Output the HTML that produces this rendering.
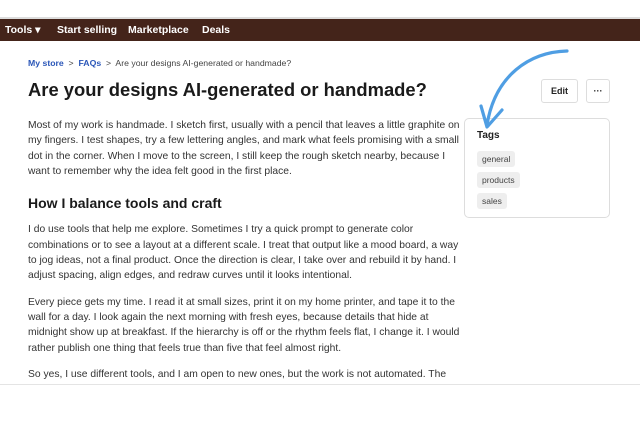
<!DOCTYPE html>
<html><head><style>
*{margin:0;padding:0;box-sizing:border-box}
body{width:640px;height:426px;background:#fff;font-family:"Liberation Sans",Arial,sans-serif;position:relative;overflow:hidden;color:#222}
.topline{position:absolute;top:17px;left:0;width:640px;height:2px;background:#ddd}
.nav{position:absolute;top:19px;left:0;width:640px;height:22px;background:#44241a;color:#fff;font-size:10.5px;font-weight:bold}
.nav span{position:absolute;top:5px}
.bc{position:absolute;top:58px;left:28px;font-size:8.7px;color:#444}
.bc a{color:#2a56b8;font-weight:bold;text-decoration:none}
h1{position:absolute;top:79px;left:28px;font-size:18.4px;font-weight:bold;color:#1a1a1a}
.content{position:absolute;top:118px;left:28px;width:434px;font-size:10.3px;line-height:15.3px;color:#333}
.content p{margin-bottom:11px}
.content h2{font-size:14px;font-weight:bold;color:#1a1a1a;margin:17px 0 11px}
.btn{position:absolute;border:1px solid #ddd;border-radius:3px;background:#fff;font-size:9px;font-weight:bold;text-align:center;line-height:22px}
.box{position:absolute;left:464px;top:118px;width:146px;height:100px;border:1px solid #ddd;border-radius:5px}
.box b{position:absolute;left:12px;top:11px;font-size:10px}
.tag{position:absolute;left:12px;background:#eee;border-radius:3px;font-size:8.5px;color:#444;padding:3px 5px}
.cut{position:absolute;top:384px;left:0;width:640px;height:42px;background:#fff;border-top:1px solid #e4e4e4}
</style></head><body>
<div class="topline"></div>
<div class="nav"><span style="left:5px">Tools ▾</span><span style="left:57px">Start selling</span><span style="left:128px">Marketplace</span><span style="left:202px">Deals</span></div>
<div class="bc"><a>My store</a> &nbsp;&gt;&nbsp; <a>FAQs</a> &nbsp;&gt;&nbsp; Are your designs AI-generated or handmade?</div>
<h1>Are your designs AI-generated or handmade?</h1>
<div class="content">
<p>Most of my work is handmade. I sketch first, usually with a pencil that leaves a little graphite on my fingers. I test shapes, try a few lettering angles, and mark what feels promising with a small dot in the corner. When I move to the screen, I still keep the rough sketch nearby, because I want to remember why the idea felt good in the first place.</p>
<h2>How I balance tools and craft</h2>
<p>I do use tools that help me explore. Sometimes I try a quick prompt to generate color combinations or to see a layout at a different scale. I treat that output like a mood board, a way to jog ideas, not a final product. Once the direction is clear, I take over and rebuild it by hand. I adjust spacing, align edges, and redraw curves until it looks intentional.</p>
<p>Every piece gets my time. I read it at small sizes, print it on my home printer, and tape it to the wall for a day. I look again the next morning with fresh eyes, because details that hide at midnight show up at breakfast. If the hierarchy is off or the rhythm feels flat, I change it. I would rather publish one thing that feels true than five that feel almost right.</p>
<p>So yes, I use different tools, and I am open to new ones, but the work is not automated. The decisions are mine. However an idea starts, it ends as something personal that I can stand behind.</p>
</div>
<div class="btn" style="left:541px;top:79px;width:37px;height:24px">Edit</div>
<div class="btn" style="left:586px;top:79px;width:24px;height:24px">···</div>
<div class="box"><b>Tags</b>
<span class="tag" style="top:32px">general</span>
<span class="tag" style="top:53px">products</span>
<span class="tag" style="top:74px">sales</span></div>
<svg style="position:absolute;left:0;top:0" width="640" height="426"><g fill="none" stroke="#4f9ee3" stroke-width="3.2" stroke-linecap="round" stroke-linejoin="round">
<path d="M567 51 C530 52 495 75 487 125"/><path d="M481 106 L487 127 L502 110"/></g></svg>
<div class="cut"></div>
</body></html>
